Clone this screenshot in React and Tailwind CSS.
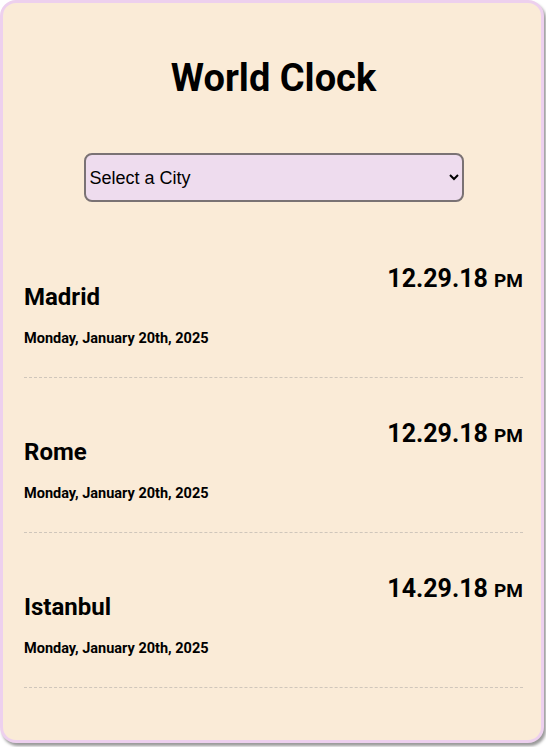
import { useState } from 'react';

const CITIES = [
    { name: 'Madrid', time: '12.29.18', ampm: 'PM', date: 'Monday, January 20th, 2025' },
    { name: 'Rome', time: '12.29.18', ampm: 'PM', date: 'Monday, January 20th, 2025' },
    { name: 'Istanbul', time: '14.29.18', ampm: 'PM', date: 'Monday, January 20th, 2025' },
];

const CityRow = ({ city }) => (
    <div className="pt-[42px] pb-[30px] border-b border-dashed border-[#cfc6bb] flex justify-between items-start">
        <div>
            <h2 className="mt-[18px] text-[24px] leading-[28px] font-bold">{city.name}</h2>
            <p className="mt-[20px] text-[14.5px] leading-[16px] font-bold">{city.date}</p>
        </div>
        <div className="text-[25px] leading-[28px] font-bold">
            {city.time} <span className="text-[19px]">{city.ampm}</span>
        </div>
    </div>
);

export default function App() {
    const [selected, setSelected] = useState('');

    return (
        <div className="w-[546px] h-[747px] bg-white">
            <div
                className="w-[544px] h-[743px] rounded-[16px] border-[3px] border-[#edd0ee] bg-[#faebd7] shadow-[2px_3px_3px_rgba(0,0,0,0.4)] pl-[21px] pr-[18px] text-black"
                style={{ fontFamily: 'Roboto, "Liberation Sans", sans-serif' }}
            >
                <h1 className="pt-[56px] text-center text-[38px] leading-[38px] font-bold">World Clock</h1>

                <div className="mt-[56px] flex justify-center">
                    <select
                        value={selected}
                        onChange={(e) => setSelected(e.target.value)}
                        className="w-[380px] h-[49px] rounded-[8px] border-2 border-[#7a7274] bg-[#eedcee] px-0 text-[18px]"
                        style={{ fontFamily: '"Liberation Sans", Arial, sans-serif' }}
                    >
                        <option value="">Select a City</option>
                        <option value="madrid">Madrid</option>
                        <option value="rome">Rome</option>
                        <option value="istanbul">Istanbul</option>
                    </select>
                </div>

                <div className="mt-[21px]">
                    {CITIES.map((city) => (
                        <CityRow key={city.name} city={city} />
                    ))}
                </div>
            </div>
        </div>
    );
}
